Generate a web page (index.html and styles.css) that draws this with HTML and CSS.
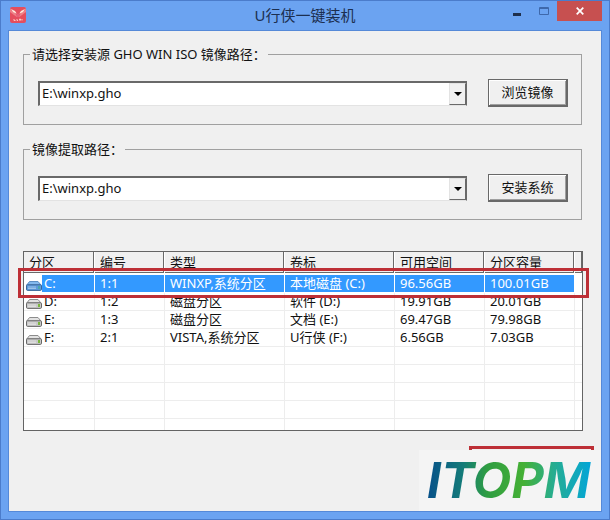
FILE: index.html
```html
<!DOCTYPE html>
<html lang="zh-CN">
<head>
    <meta charset="utf-8" />
    <title>U行侠一键装机</title>
    <link rel="stylesheet" href="styles.css">
</head>
<body>
    <svg class="defs" width="0" height="0" aria-hidden="true">
        <symbol id="drive" viewBox="0 0 16 11">
            <path class="drive-top" d="M3.5 1.5h8.5l3 3.5H.8z" />
            <path class="drive-front" d="M.5 5.5q0-.7.8-.7h13.2q1 0 1 .8v3.6q0 1.2-1.2 1.2H1.6q-1.1 0-1.1-1.2z" />
            <path d="M2 7h8M2 8.5h8" stroke="#ffffff" stroke-opacity=".4" />
            <path class="drive-led" d="M12 6h2v3h-2z" />
        </symbol>
    </svg>
    <div class="window">
        <header class="title-bar">
            <svg class="app-icon" viewBox="0 0 16 16" aria-hidden="true">
                <rect width="16" height="16" rx="2" fill="#e54e5e" />
                <path d="M0 1q2 4 5 5l2 3h2l2-3q3-1 5-5v4l-4 3-3 2H7L4 8 0 5z" fill="#ee8088" />
                <path d="M1 2l4 2 2 3-4-2zM15 2l-4 2-2 3 4-2z" fill="#ffe9dc" />
                <path d="M6 6l2 1 2-1-1 4H7z" fill="#e85f77" />
                <path d="M4 12v1.500h1.500M7 12v1.500h1M9.500 13.500V12h1v1.500M12 12v1.500" fill="none" stroke="#ffc6c0" />
            </svg>
            <h1 class="title">U行侠一键装机</h1>
            <div class="window-buttons">
                <button class="window-button" aria-label="最小化">
                    <svg width="10" height="16" viewBox="0 0 10 16"><path d="M1 12h8v3H1z" fill="#1e2f4d" /></svg>
                </button>
                <button class="window-button" aria-label="最大化">
                    <svg width="10" height="16" viewBox="0 0 10 16"><path d="M.5 6.500h9v7h-9zM0 7.500h10" fill="none" stroke="#3e68ab" /></svg>
                </button>
                <button class="window-button window-close" aria-label="关闭">
                    <svg width="8" height="8" viewBox="0 0 8 8"><path d="M.7.7l6.600 6.600M7.300.7L.7 7.300" stroke="#ffffff" stroke-width="1.700" /></svg>
                </button>
            </div>
        </header>

        <main class="client">
            <fieldset class="group">
                <legend>请选择安装源 GHO WIN ISO 镜像路径：</legend>
                <div class="combo">
                    <select class="combo-select" aria-label="镜像路径">
                        <option>E:\winxp.gho</option>
                    </select>
                    <span class="combo-arrow"></span>
                </div>
                <button class="push-button">浏览镜像</button>
            </fieldset>

            <fieldset class="group">
                <legend>镜像提取路径：</legend>
                <div class="combo">
                    <select class="combo-select" aria-label="提取路径">
                        <option>E:\winxp.gho</option>
                    </select>
                    <span class="combo-arrow"></span>
                </div>
                <button class="push-button">安装系统</button>
            </fieldset>

            <div class="list">
                <table class="partitions">
                    <colgroup>
                        <col class="col-drive"><col class="col-number"><col class="col-type"><col class="col-label"><col class="col-size"><col class="col-size"><col>
                    </colgroup>
                    <thead>
                        <tr><th>分区</th><th>编号</th><th>类型</th><th>卷标</th><th>可用空间</th><th>分区容量</th><th></th></tr>
                    </thead>
                    <tbody>
                        <tr class="selected">
                            <td class="drive"><div><svg><use href="#drive" /></svg><span>C:</span></div></td>
                            <td>1:1</td><td>WINXP,系统分区</td><td>本地磁盘 (C:)</td><td>96.56GB</td><td>100.01GB</td><td></td>
                        </tr>
                        <tr>
                            <td class="drive"><div><svg><use href="#drive" /></svg><span>D:</span></div></td>
                            <td>1:2</td><td>磁盘分区</td><td>软件 (D:)</td><td>19.91GB</td><td>20.01GB</td><td></td>
                        </tr>
                        <tr>
                            <td class="drive"><div><svg><use href="#drive" /></svg><span>E:</span></div></td>
                            <td>1:3</td><td>磁盘分区</td><td>文档 (E:)</td><td>69.47GB</td><td>79.98GB</td><td></td>
                        </tr>
                        <tr>
                            <td class="drive"><div><svg><use href="#drive" /></svg><span>F:</span></div></td>
                            <td>2:1</td><td>VISTA,系统分区</td><td>U行侠 (F:)</td><td>6.56GB</td><td>7.03GB</td><td></td>
                        </tr>
                        <tr><td></td><td></td><td></td><td></td><td></td><td></td><td></td></tr>
                        <tr><td></td><td></td><td></td><td></td><td></td><td></td><td></td></tr>
                        <tr><td></td><td></td><td></td><td></td><td></td><td></td><td></td></tr>
                        <tr><td></td><td></td><td></td><td></td><td></td><td></td><td></td></tr>
                        <tr class="last"><td></td><td></td><td></td><td></td><td></td><td></td><td></td></tr>
                    </tbody>
                </table>
                <div class="highlight"></div>
            </div>

            <footer class="footer">
                <div class="footer-mark"></div>
                <div class="brand"><span>ITOPM</span></div>
            </footer>
        </main>
    </div>
</body>
</html>
```
FILE: styles.css
```css
* {
    box-sizing: border-box;
}

body {
    margin: 0;
    font-family: "Noto Sans", "Noto Sans CJK SC", sans-serif;
    font-size: 13px;
    line-height: 17px;
    color: #111111;
}

button,
select {
    font: inherit;
    color: inherit;
}

.defs {
    position: absolute;
}

.window {
    display: flex;
    flex-direction: column;
    min-height: 100vh;
    padding: 0 7px 7px;
    background: #6ba3f1;
    border: 1px solid #4b7ccb;
}

.title-bar {
    display: grid;
    grid-template-columns: 1fr auto 1fr;
    height: 29px;
}

.app-icon {
    width: 16px;
    height: 16px;
    margin: 6px 2px;
}

.title {
    margin: 0;
    font-size: 15px;
    font-weight: normal;
    line-height: 29px;
    color: #1c2f50;
}

.window-buttons {
    display: flex;
    justify-content: flex-end;
    align-items: flex-start;
}

.window-button {
    display: flex;
    justify-content: center;
    width: 27px;
    height: 20px;
    padding: 0;
    background: none;
    border: none;
}

.window-close {
    align-items: center;
    width: 45px;
    background: #c75050;
}

.client {
    display: flex;
    flex: 1;
    flex-direction: column;
    padding-top: 15px;
    background: #f0f0f0;
    border: 1px solid #5589d8;
}

/* group boxes */
.group {
    display: flex;
    align-items: center;
    gap: 21px;
    min-width: 0;
    margin: 0 19px 16px 14px;
    padding: 16px 13px 17px 14px;
    border: 1px solid #a0a0a0;
}

.group legend {
    margin-left: -8px;
    padding: 0 2px;
}

.combo {
    position: relative;
    flex: 1;
}

.combo-select {
    display: block;
    width: 100%;
    height: 25px;
    padding: 0 20px 0 2px;
    appearance: none;
    background: #ffffff;
    border: 1px solid #696969;
    border-width: 2px 1px 1px 2px;
    border-color: #696969 #696969 #e3e3e3 #696969;
    border-radius: 0;
}

.combo-arrow {
    position: absolute;
    top: 2px;
    right: 1px;
    bottom: 1px;
    display: flex;
    align-items: center;
    justify-content: center;
    width: 17px;
    background: #f0f0f0;
    border: 1px solid #e3e3e3;
    border-right-color: #696969;
    border-bottom-color: #696969;
    pointer-events: none;
}

.combo-arrow::before {
    content: "";
    border: 4px solid transparent;
    border-top-color: #000000;
    border-bottom: none;
}

.push-button {
    width: 80px;
    height: 28px;
    padding: 0;
    background: #f0f0f0;
    border: 1px solid #696969;
    border-right-width: 2px;
    border-bottom-width: 2px;
    box-shadow: inset 1px 1px #ffffff, inset -1px -1px #a0a0a0;
}

/* partition list */
.list {
    position: relative;
    margin: 15px 18px 0 14px;
    background: #ffffff;
    border: 1px solid #646464;
}

.partitions {
    width: 100%;
    table-layout: fixed;
    border-collapse: separate;
    border-spacing: 0;
}

.col-drive {
    width: 71px;
}

.col-number {
    width: 70px;
}

.col-type {
    width: 120px;
}

.col-label {
    width: 110px;
}

.col-size {
    width: 90px;
}

.partitions th {
    height: 23px;
    padding: 0 5px;
    font-weight: normal;
    text-align: left;
    white-space: nowrap;
    background: #f0f0f0;
    border-right: 1px solid #ffffff;
    border-bottom: 2px solid #ffffff;
    box-shadow: inset -1px -1px #696969;
}

.partitions td {
    height: 18px;
    padding: 0 5px;
    line-height: 17px;
    white-space: nowrap;
    border-right: 1px solid #ededed;
    border-bottom: 1px solid #ededed;
}

.partitions th:last-child,
.partitions td:last-child {
    border-right: none;
}

.partitions .last td {
    height: 11px;
    border-bottom: none;
}

.partitions td.drive {
    padding: 0;
}

.drive div {
    display: flex;
    padding-left: 2px;
}

.drive svg {
    width: 16px;
    height: 11px;
    margin-top: 5px;
}

.drive span {
    flex: 1;
    padding-left: 2px;
}

.drive-top {
    fill: var(--drive-top, #e2e2e2);
    stroke: var(--drive-edge, #8c8c8c);
}

.drive-front {
    fill: var(--drive-front, #c9c9c9);
    stroke: var(--drive-line, #686868);
}

.drive-led {
    fill: var(--drive-led, #79b63c);
}

.selected {
    --drive-top: #83b9ee;
    --drive-edge: #5c8fc4;
    --drive-front: #5d9bdc;
    --drive-line: #3a6698;
    --drive-led: #4aa8a8;
}

.selected td {
    color: #ffffff;
    background: #3399ff;
    border-color: #ffffff;
}

.selected td.drive,
.selected td:last-child {
    background: none;
}

.selected .drive span {
    background: #3399ff;
}

.highlight {
    position: absolute;
    top: 16px;
    right: -7px;
    left: -6px;
    height: 30px;
    border: 3px solid #bd2f36;
}

/* footer */
.footer {
    display: flex;
    flex-direction: column;
    align-items: flex-end;
    margin-top: auto;
}

.footer-mark {
    width: 125px;
    height: 4px;
    margin-right: 7px;
    border: 3px solid #bd2f36;
    border-bottom: none;
}

.brand {
    width: 182px;
    padding: 0 8px;
    background: #f4f4f4;
}

.brand span {
    display: block;
    font-family: Inter, Roboto, sans-serif;
    font-size: 50px;
    font-style: italic;
    font-weight: bold;
    line-height: 61px;
    color: transparent;
    background: linear-gradient(90deg, #07508a 0%, #147c78 22%, #2f9d42 36%, #45b035 58%, #27ad8f 76%, #00a5dc 100%);
    -webkit-background-clip: text;
    background-clip: text;
}
```
